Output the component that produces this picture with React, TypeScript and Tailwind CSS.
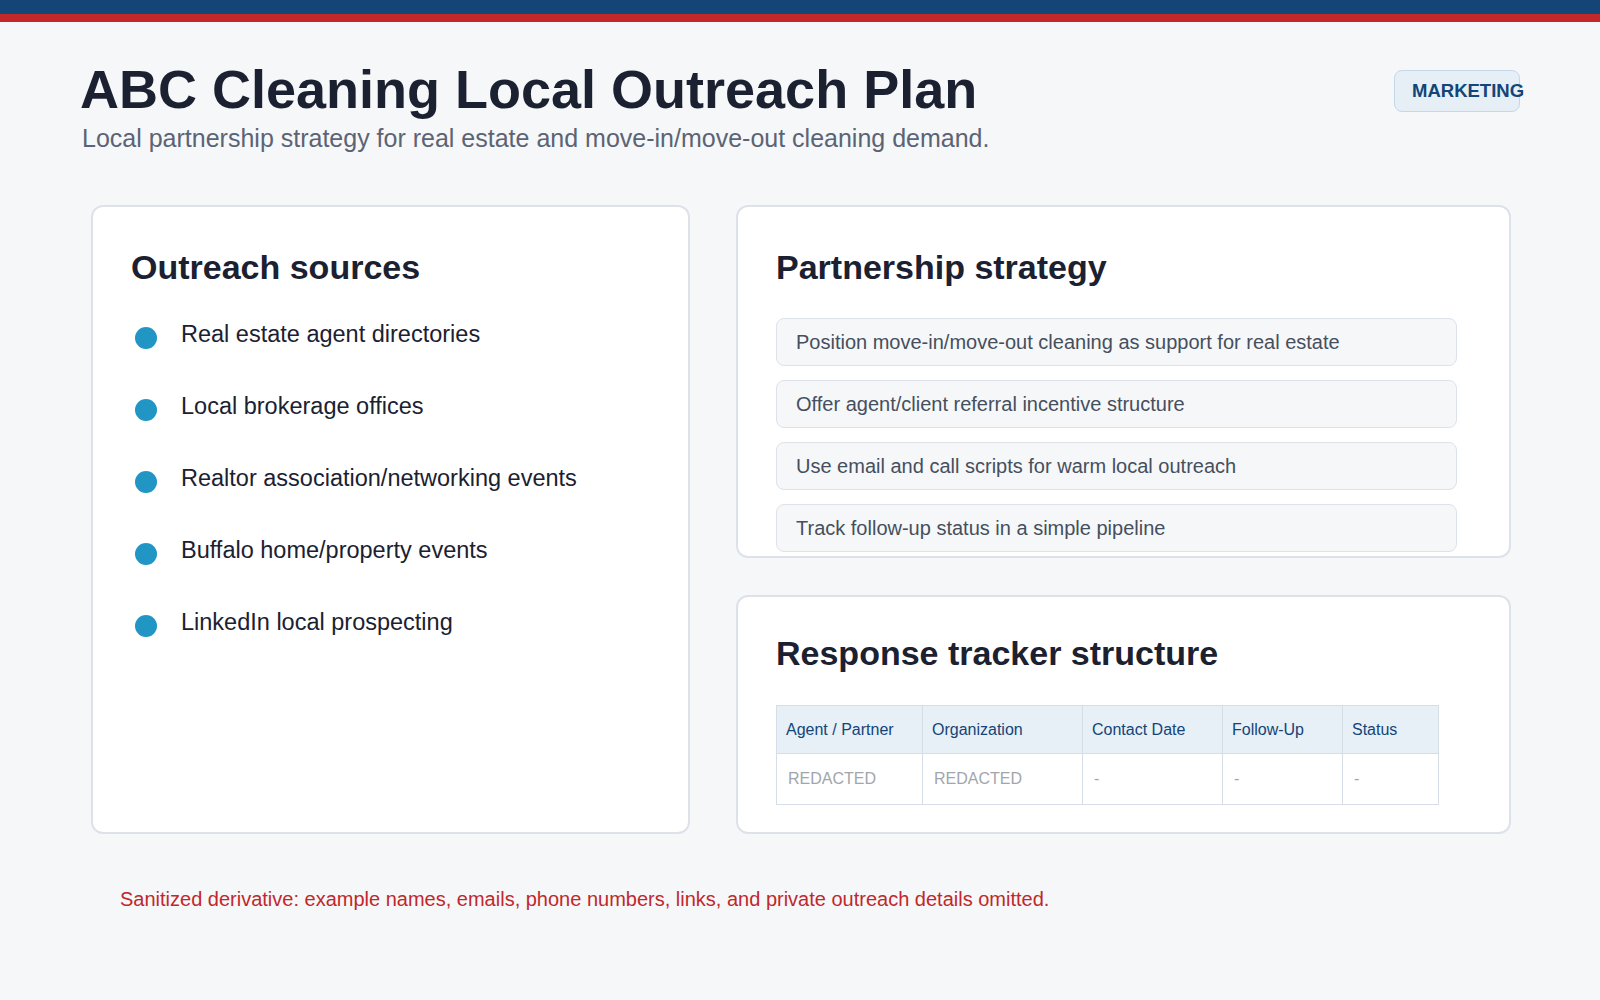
export default function App() {
  const sources = [
    "Real estate agent directories",
    "Local brokerage offices",
    "Realtor association/networking events",
    "Buffalo home/property events",
    "LinkedIn local prospecting",
  ];
  const strat = [
    "Position move-in/move-out cleaning as support for real estate",
    "Offer agent/client referral incentive structure",
    "Use email and call scripts for warm local outreach",
    "Track follow-up status in a simple pipeline",
  ];
  const cols = [
    ["Agent / Partner", "REDACTED", "w-[145px]"],
    ["Organization", "REDACTED", "w-[160px]"],
    ["Contact Date", "-", "w-[140px]"],
    ["Follow-Up", "-", "w-[120px]"],
    ["Status", "-", "w-[96px]"],
  ];
  return (
    <div className="w-[1600px] h-[1000px] bg-[#f6f7f9] overflow-hidden" style={{ fontFamily: '"Liberation Sans", Arial, sans-serif' }}>
      <div className="h-[14px] bg-[#134577]" />
      <div className="h-[8px] bg-[#c0282c]" />
      <div className="flex justify-between pl-[80px] pr-[80px] pt-[34px]">
        <div>
          <h1 className="text-[54px] font-bold text-[#1b2130] leading-[66px]">ABC Cleaning Local Outreach Plan</h1>
          <p className="text-[25px] text-[#5b6474] leading-[32px] ml-[2px]">Local partnership strategy for real estate and move-in/move-out cleaning demand.</p>
        </div>
        <div className="mt-[14px] w-[126px] h-[42px] rounded-[8px] bg-[#e6eef6] border border-[#c4d8ea] flex items-center pl-[17px] text-[18.5px] font-bold text-[#134577] whitespace-nowrap">MARKETING</div>
      </div>
      <div className="flex gap-[46px] pl-[91px] mt-[51px]">
        <div className="w-[599px] h-[629px] bg-white border-2 border-[#dde2ea] rounded-[12px] pl-[38px] pt-[40px]">
          <h2 className="text-[34px] font-bold text-[#1b2130] leading-[40px]">Outreach sources</h2>
          <ul className="mt-[31px] flex flex-col gap-[40px]">
            {sources.map((s) => (
              <li key={s} className="flex items-center text-[23.5px] text-[#1b2130] leading-[32px]">
                <span className="w-[22px] h-[22px] rounded-full bg-[#2196c4] ml-[4px] mr-[24px] mt-[8px]" />
                {s}
              </li>
            ))}
          </ul>
        </div>
        <div className="flex flex-col gap-[37px]">
          <div className="w-[775px] h-[353px] bg-white border-2 border-[#dde2ea] rounded-[12px] pl-[38px] pt-[40px] overflow-hidden">
            <h2 className="text-[34px] font-bold text-[#1b2130] leading-[40px]">Partnership strategy</h2>
            <div className="mt-[31px] flex flex-col gap-[14px]">
              {strat.map((s) => (
                <div key={s} className="w-[681px] h-[48px] bg-[#f6f7f9] border border-[#dde2ea] rounded-[8px] flex items-center pl-[19px] text-[20px] text-[#454f5e]">{s}</div>
              ))}
            </div>
          </div>
          <div className="w-[775px] h-[239px] bg-white border-2 border-[#dde2ea] rounded-[12px] pl-[38px] pt-[36px]">
            <h2 className="text-[34px] font-bold text-[#1b2130] leading-[40px]">Response tracker structure</h2>
            <div className="mt-[32px] flex border border-[#d5dde6] w-fit">
              {cols.map(([h, v, w], i) => (
                <div key={h} className={`${w} ${i > 0 ? "border-l border-[#d5dde6]" : ""}`}>
                  <div className="h-[48px] bg-[#e7eff7] border-b border-[#d5dde6] flex items-center pl-[9px] text-[16px] text-[#134577]">{h}</div>
                  <div className="h-[50px] flex items-center pl-[11px] text-[16px] text-[#a1a6ad]">{v}</div>
                </div>
              ))}
            </div>
          </div>
        </div>
      </div>
      <p className="ml-[120px] mt-[50px] text-[20px] text-[#c0282c]">Sanitized derivative: example names, emails, phone numbers, links, and private outreach details omitted.</p>
    </div>
  );
}
